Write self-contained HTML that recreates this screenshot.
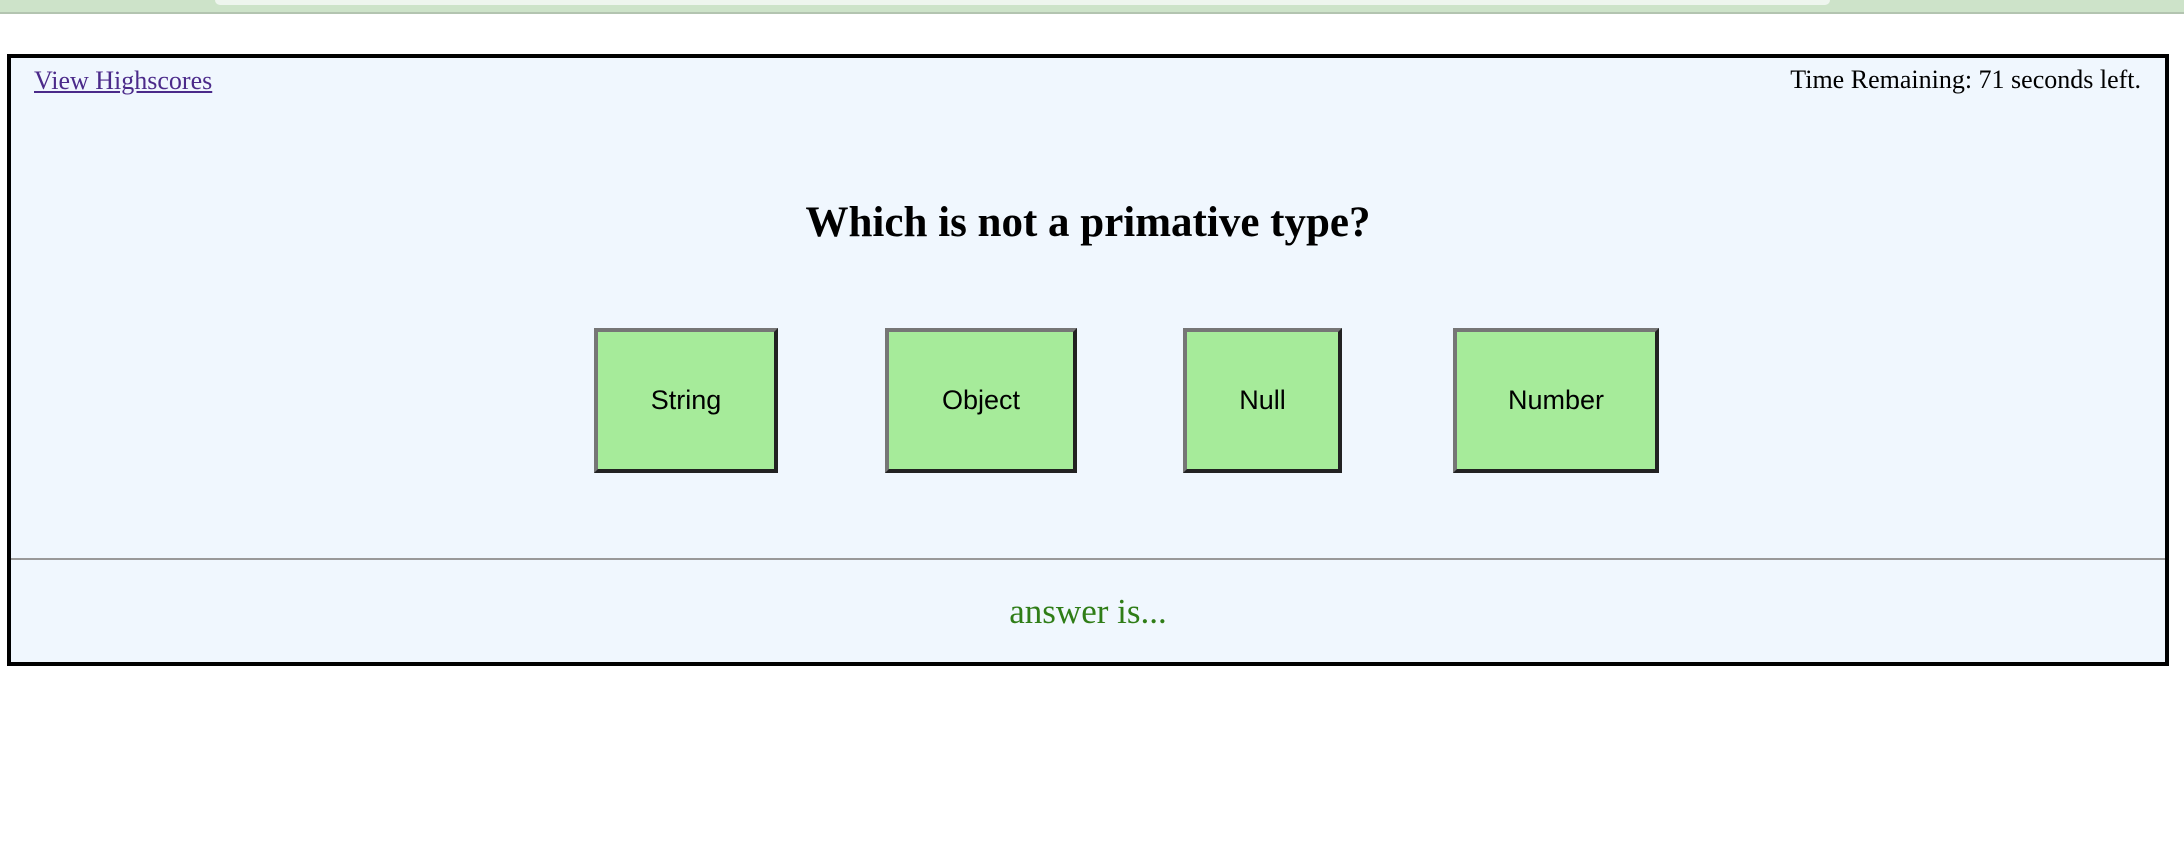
<!DOCTYPE html>
<html><head><meta charset="utf-8"><style>
body{margin:0;width:2184px;height:848px;background:#fff;position:relative;overflow:hidden;font-family:"Liberation Serif",serif}
.bar{position:absolute;left:0;top:0;width:2184px;height:12px;background:#cde3c9;border-bottom:2px solid #b3c4b0}
.tab{position:absolute;left:215px;top:0;width:1615px;height:5px;background:#eef5ee;border-radius:0 0 14px 14px}
.box{position:absolute;left:7px;top:54px;width:2154px;height:604px;border:4px solid #000;background:#f0f7fe}
a{position:absolute;left:23px;top:8px;font-size:26px;color:#4b2a8a}
.time{position:absolute;right:24px;top:7px;font-size:26px}
h1{position:absolute;left:0;width:100%;top:140px;margin:0;text-align:center;font-size:43px;font-weight:bold}
.b{position:absolute;top:270px;height:137px;background:#a6eb9a;border:4px solid;border-color:#767676 #222 #222 #767676;font-family:"Liberation Sans",sans-serif;font-size:27px;display:flex;align-items:center;justify-content:center}
.hr{position:absolute;left:0;width:100%;top:500px;height:2px;background:#999}
.ans{position:absolute;left:0;width:100%;top:534px;text-align:center;font-size:35px;color:#2f7d17}
</style></head><body>
<div class="bar"><div class="tab"></div></div>
<div class="box">
<a href="#">View Highscores</a>
<div class="time">Time Remaining: 71 seconds left.</div>
<h1>Which is not a primative type?</h1>
<div class="b" style="left:583px;width:176px">String</div>
<div class="b" style="left:874px;width:184px">Object</div>
<div class="b" style="left:1172px;width:151px">Null</div>
<div class="b" style="left:1442px;width:198px">Number</div>
<div class="hr"></div>
<div class="ans">answer is...</div>
</div>
</body></html>
